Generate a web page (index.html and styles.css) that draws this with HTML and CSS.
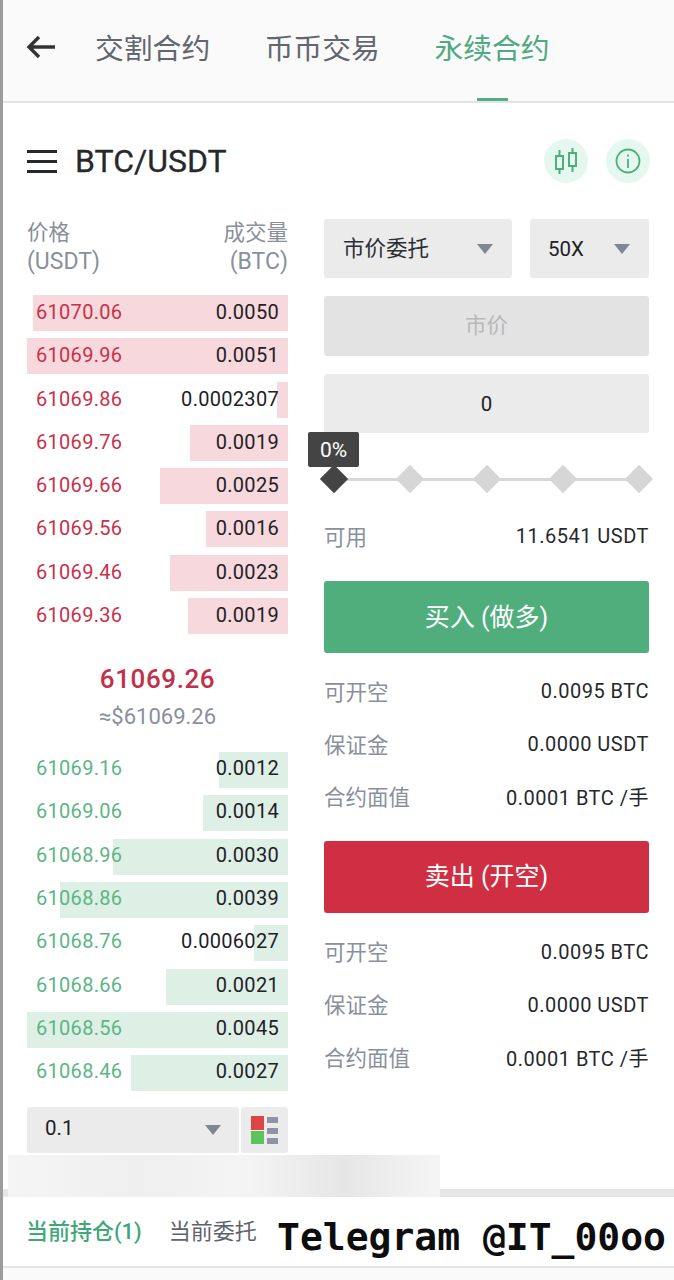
FILE: index.html
```html
<!DOCTYPE html>
<html lang="zh">
<head>
<meta charset="utf-8">
<title>永续合约</title>
<link rel="stylesheet" href="styles.css">
</head>
<body>
<div class="page">
  <header class="topbar">
    <svg class="back" viewBox="0 0 30 24" width="30" height="24"><path d="M13 2 L3 12 L13 22 M3 12 H29" fill="none" stroke="#333" stroke-width="3.4"/></svg>
    <nav class="tabs">
      <span class="tab">交割合约</span>
      <span class="tab">币币交易</span>
      <span class="tab tab-active">永续合约</span>
    </nav>
  </header>

  <section class="titlebar">
    <div class="burger"><i></i><i></i><i></i></div>
    <h1 class="pair">BTC/USDT</h1>
    <div class="round-icons">
      <span class="round"><svg viewBox="0 0 24 28" width="24" height="28"><g fill="none" stroke="#4fae7b" stroke-width="2"><rect x="2" y="9" width="7" height="13"/><rect x="15" y="6" width="7" height="13"/><path d="M5.500 3V9M5.500 22V27M18.500 1V6M18.500 19V25"/></g></svg></span>
      <span class="round"><svg viewBox="0 0 26 26" width="26" height="26"><circle cx="13" cy="13" r="11.500" fill="none" stroke="#4fae7b" stroke-width="1.800"/><path d="M13 11V20M13 6.500V8.500" stroke="#4fae7b" stroke-width="1.800"/></svg></span>
    </div>
  </section>

  <main class="trade">
    <section class="book">
      <div class="book-head">
        <div>价格<br><span class="unit">(USDT)</span></div>
        <div class="right">成交量<br><span class="unit">(BTC)</span></div>
      </div>
      <div class="rows rows-ask">
        <div class="row"><b class="bar" style="width:255px"></b><span class="price">61070.06</span><span class="qty">0.0050</span></div>
        <div class="row"><b class="bar" style="width:261px"></b><span class="price">61069.96</span><span class="qty">0.0051</span></div>
        <div class="row"><b class="bar" style="width:11px"></b><span class="price">61069.86</span><span class="qty">0.0002307</span></div>
        <div class="row"><b class="bar" style="width:98px"></b><span class="price">61069.76</span><span class="qty">0.0019</span></div>
        <div class="row"><b class="bar" style="width:128px"></b><span class="price">61069.66</span><span class="qty">0.0025</span></div>
        <div class="row"><b class="bar" style="width:82px"></b><span class="price">61069.56</span><span class="qty">0.0016</span></div>
        <div class="row"><b class="bar" style="width:118px"></b><span class="price">61069.46</span><span class="qty">0.0023</span></div>
        <div class="row"><b class="bar" style="width:100px"></b><span class="price">61069.36</span><span class="qty">0.0019</span></div>
      </div>
      <div class="mid">
        <div class="mid-price">61069.26</div>
        <div class="mid-usd">≈$61069.26</div>
      </div>
      <div class="rows rows-bid">
        <div class="row"><b class="bar" style="width:69px"></b><span class="price">61069.16</span><span class="qty">0.0012</span></div>
        <div class="row"><b class="bar" style="width:85px"></b><span class="price">61069.06</span><span class="qty">0.0014</span></div>
        <div class="row"><b class="bar" style="width:175px"></b><span class="price">61068.96</span><span class="qty">0.0030</span></div>
        <div class="row"><b class="bar" style="width:228px"></b><span class="price">61068.86</span><span class="qty">0.0039</span></div>
        <div class="row"><b class="bar" style="width:34px"></b><span class="price">61068.76</span><span class="qty">0.0006027</span></div>
        <div class="row"><b class="bar" style="width:122px"></b><span class="price">61068.66</span><span class="qty">0.0021</span></div>
        <div class="row"><b class="bar" style="width:261px"></b><span class="price">61068.56</span><span class="qty">0.0045</span></div>
        <div class="row"><b class="bar" style="width:157px"></b><span class="price">61068.46</span><span class="qty">0.0027</span></div>
      </div>
      <div class="book-foot">
        <div class="depth"><span class="depth-val">0.1</span><i class="caret"></i></div>
        <div class="layout-btn">
          <svg viewBox="0 0 27 28" width="27" height="28">
            <rect x="0" y="0" width="13" height="14" fill="#dd4444"/>
            <rect x="0" y="15" width="13" height="13" fill="#5cc45c"/>
            <rect x="16" y="1" width="11" height="6" fill="#8f93a3"/>
            <rect x="16" y="12" width="11" height="6" fill="#8f93a3"/>
            <rect x="16" y="22" width="11" height="6" fill="#8f93a3"/>
          </svg>
        </div>
      </div>
    </section>

    <section class="form">
      <div class="selects">
        <div class="field select-type"><span class="cjk-dark">市价委托</span><i class="caret"></i></div>
        <div class="field select-lev"><span class="num">50X</span><i class="caret"></i></div>
      </div>
      <div class="field box muted"><span class="cjk-label">市价</span></div>
      <div class="field box num">0</div>

      <div class="slider">
        <span class="dot dot-on"></span><span class="dot"></span><span class="dot"></span><span class="dot"></span><span class="dot"></span>
        <span class="tip">0%</span>
      </div>

      <div class="stat first"><span class="k">可用</span><span class="v">11.6541 USDT</span></div>
      <button class="action buy">买入 (做多)</button>
      <div class="stat"><span class="k">可开空</span><span class="v">0.0095 BTC</span></div>
      <div class="stat"><span class="k">保证金</span><span class="v">0.0000 USDT</span></div>
      <div class="stat"><span class="k">合约面值</span><span class="v">0.0001 BTC /手</span></div>
      <button class="action sell">卖出 (开空)</button>
      <div class="stat"><span class="k">可开空</span><span class="v">0.0095 BTC</span></div>
      <div class="stat"><span class="k">保证金</span><span class="v">0.0000 USDT</span></div>
      <div class="stat"><span class="k">合约面值</span><span class="v">0.0001 BTC /手</span></div>
    </section>
  </main>

  <div class="divider"></div>
  <section class="bottom-tabs">
    <span class="btab-on">当前持仓(1)</span>
    <span class="btab">当前委托</span>
  </section>
  <div class="tail"></div>

  <div class="smudge"></div>
  <div class="watermark">Telegram @IT_00oo</div>
</div>
</body>
</html>
```
FILE: styles.css
```css
* { box-sizing: border-box; }
html, body { margin: 0; padding: 0; background: #fff; }
body {
  font-family: Roboto, "Noto Sans CJK SC", sans-serif;
  color: #1e2126;
}
.page {
  position: relative;
  width: 674px;
  height: 1280px;
  overflow: hidden;
  border-left: 3px solid #9c9c9c;
}

/* top bar */
.topbar {
  display: flex;
  align-items: center;
  height: 103px;
  padding: 0 0 7px 23px;
  background: #fafafa;
  border-bottom: 2px solid #e4e4e4;
}
.back { display: block; margin-right: 39px; }
.tabs { display: flex; gap: 54.500px; }
.tab {
  position: relative;
  top: 2px;
  font-size: 28.800px;
  line-height: 40px;
  color: #62666e;
}
.tab-active { color: #4fa981; }
.tab-active::after {
  content: "";
  position: absolute;
  left: 43px;
  bottom: -32px;
  width: 31px;
  height: 3px;
  background: #4fae84;
}

/* title row */
.titlebar {
  display: flex;
  align-items: center;
  height: 116px;
  padding: 0 24px;
}
.burger { display: flex; flex-direction: column; gap: 7px; width: 30px; margin-right: 18px; }
.burger i { display: block; height: 3px; background: #26282c; }
.pair { margin: 0; font-size: 32px; font-weight: 400; line-height: 36px; color: #26282c; -webkit-text-stroke: .3px #26282c; }
.round-icons { display: flex; gap: 18px; margin-left: auto; }
.round {
  display: flex;
  align-items: center;
  justify-content: center;
  width: 44px;
  height: 44px;
  border-radius: 50%;
  background: #e4f8ef;
}

/* two columns */
.trade {
  display: flex;
  gap: 36px;
  padding: 0 25px 0 24px;
  height: 970px;
}
.book { width: 261px; }
.form { width: 325px; }

/* order book */
.book-head {
  display: flex;
  justify-content: space-between;
  font-size: 21.500px;
  line-height: 29px;
  color: #8a8f9c;
  height: 76px;
  margin-top: -1px;
  margin-bottom: 1px;
}
.unit { font-size: 23px; }
.right { text-align: right; }
.rows { display: flex; flex-direction: column; gap: 7.300px; }
.row {
  position: relative;
  display: flex;
  justify-content: space-between;
  align-items: center;
  height: 36px;
  padding: 0 9px;
  font-size: 20px;
  letter-spacing: .3px;
}
.bar { position: absolute; top: 0; right: 0; bottom: 0; }
.price, .qty { position: relative; top: -1px; }
.rows-ask .bar { background: #f7d8dc; }
.rows-ask .price { color: #c9304a; }
.rows-bid .bar { background: #deefe6; }
.rows-bid .price { color: #5cb585; }
.rows-bid .price, .rows-bid .qty { top: -2px; }
.mid { text-align: center; padding-top: 27px; height: 118px; }
.mid-price { font-size: 26px; font-weight: 500; line-height: 36px; color: #c22f49; letter-spacing: .6px; }
.mid-usd { font-size: 22px; line-height: 28px; margin-top: 6px; color: #8a8f9c; }
.book-foot { display: flex; gap: 2px; margin-top: 16px; height: 46px; }
.depth {
  display: flex;
  align-items: center;
  justify-content: space-between;
  width: 212px;
  padding: 0 18px;
  background: #ebebeb;
  border-radius: 3px;
  font-size: 20.500px;
}
.depth-val { position: relative; top: -2px; }
.layout-btn {
  display: flex;
  align-items: center;
  justify-content: center;
  width: 47px;
  background: #ebebeb;
  border-radius: 3px;
}
.caret {
  display: block;
  width: 0;
  height: 0;
  border-left: 8px solid transparent;
  border-right: 8px solid transparent;
  border-top: 10px solid #7f8694;
}

/* order form */
.selects { display: flex; gap: 18px; margin-bottom: 18px; }
.field {
  display: flex;
  align-items: center;
  height: 59px;
  background: #ebebeb;
  border-radius: 3px;
  font-size: 21.500px;
}
.select-type { width: 188px; justify-content: space-between; padding: 0 19px; }
.select-lev { width: 119px; justify-content: space-between; padding: 0 19px 0 18px; }
.cjk-dark { color: #2b2e33; position: relative; top: -2px; }
.cjk-label { position: relative; top: -3px; }
.num { font-size: 20.500px; }
.box { justify-content: center; margin-bottom: 18px; }
.muted { background: #e3e3e3; color: #b8b8b8; height: 60px; }

.slider {
  position: relative;
  display: flex;
  justify-content: space-between;
  align-items: center;
  height: 28px;
  margin: 32px 0 0;
  background: linear-gradient(#d8d8d8, #d8d8d8) center / 100% 3px no-repeat;
}
.dot {
  display: block;
  width: 20px;
  height: 20px;
  background: #d6d6d6;
  transform: rotate(45deg);
}
.dot-on { background: #444; }
.tip {
  position: absolute;
  left: -16px;
  top: -33px;
  width: 51px;
  height: 35px;
  line-height: 37px;
  text-align: center;
  background: #444;
  border-radius: 2px;
  color: #fff;
  font-size: 21px;
}

.stat {
  display: flex;
  justify-content: space-between;
  align-items: center;
  height: 52.800px;
}
.stat.first { margin-top: 26px; height: 32px; }
.k { font-size: 21.500px; color: #8a8f9c; }
.v { font-size: 20px; letter-spacing: .5px; color: #26282c; position: relative; top: 3px; margin-top: -4px; }

.action {
  display: block;
  width: 325px;
  height: 72px;
  padding: 0 0 5px;
  border: 0;
  border-radius: 3px;
  color: #fff;
  font-family: Roboto, "Noto Sans CJK SC", sans-serif;
  font-size: 25px;
  font-weight: 400;
}
.buy { margin: 30px 0 11px; background: #4fae7b; }
.sell { margin: 18.500px 0 11.500px; background: #d02e42; }

/* bottom */
.divider { height: 8px; background: #e6e6e6; }
.bottom-tabs {
  display: flex;
  align-items: center;
  gap: 27px;
  height: 69px;
  padding: 0 0 6px 23px;
  background: #fff;
  font-size: 22px;
}
.btab-on { color: #3fa878; font-weight: 500; }
.btab { color: #5f636b; }
.tail { height: 14px; border-top: 2px solid #e6e6e6; background: #fafafa; }

.smudge {
  position: absolute;
  left: 5px;
  top: 1155px;
  width: 432px;
  height: 42px;
  background: linear-gradient(90deg, #f5f5f5, #efefef 30%, #f4f4f4 55%, #e6e6e6 78%, #f0f0f0 92%, #f4f4f4);
}
.watermark {
  position: absolute;
  right: 0;
  top: 1209px;
  width: 417px;
  height: 56px;
  padding-left: 20px;
  background: #fff;
  font-family: "DejaVu Sans Mono", monospace;
  font-weight: 700;
  font-size: 38px;
  line-height: 56px;
  color: #0d0d0d;
  white-space: nowrap;
}
```
